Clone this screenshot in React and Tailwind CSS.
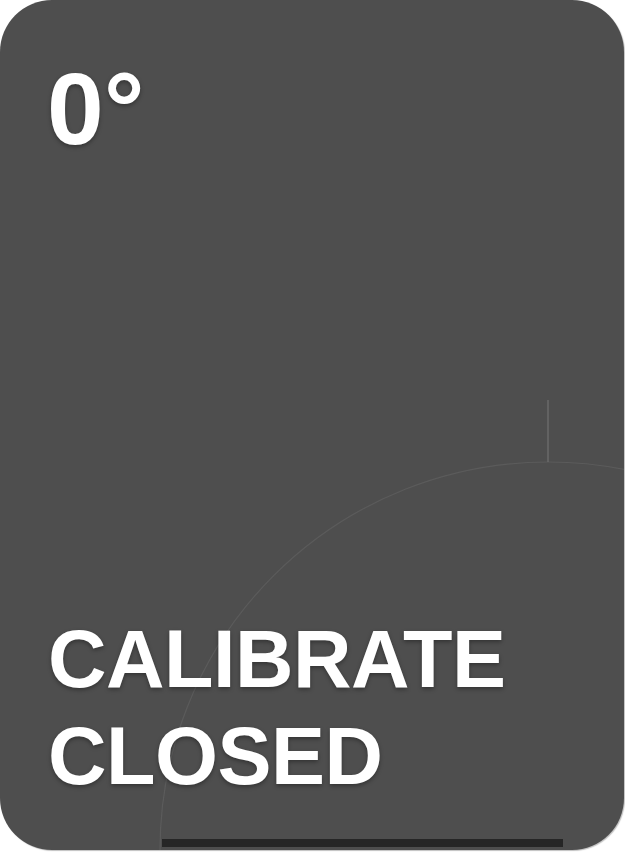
export default function App() {
  const font = { fontFamily: '"Liberation Sans", Arial, Helvetica, sans-serif' };
  return (
    <div className="w-[625px] h-[852px] bg-white">
      <div
        className="relative w-[624px] h-[850px] rounded-[52px] bg-[#4e4e4e] overflow-hidden flex flex-col shadow-[1px_1px_1px_rgba(0,0,0,0.25)]"
        style={font}
      >
        <svg
          className="absolute inset-0 pointer-events-none"
          width="624"
          height="850"
          viewBox="0 0 624 850"
        >
          <circle cx="548" cy="850" r="388" fill="none" stroke="#5b5b5b" strokeWidth="1.2" />
          <line x1="548" y1="400" x2="548" y2="462" stroke="#6a6a6a" strokeWidth="1.5" />
        </svg>
        <div className="relative pt-[58px] pl-[47px] text-white font-bold text-[102px] leading-none [text-shadow:0_2px_4px_rgba(0,0,0,0.35)]">
          0°
        </div>
        <div className="flex-1" />
        <div className="relative pl-[48px] text-white font-bold text-[81px] leading-[97px] tracking-[-0.5px] [text-shadow:0_2px_4px_rgba(0,0,0,0.35)]">
          <div>CALIBRATE</div>
          <div>CLOSED</div>
        </div>
        <div className="relative pl-[162px] pt-[34px] pb-[3px]">
          <div className="w-[401px] h-[8px] bg-[#262626]" />
        </div>
      </div>
    </div>
  );
}
